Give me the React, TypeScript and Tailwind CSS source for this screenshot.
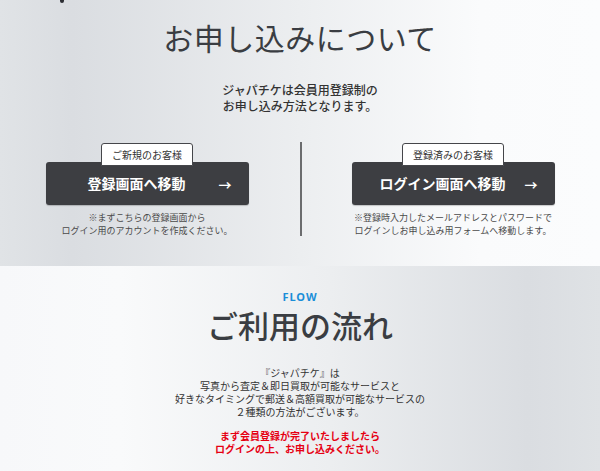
const jp = { fontFamily: '"Noto Sans CJK JP", "Noto Sans", sans-serif' }

function EntryButton({ tab, label, notes }: { tab: string; label: string; notes: string[] }) {
  return (
    <div className="flex w-[203px] flex-col items-center">
      <div className="relative z-10 mb-[-4px] flex h-[23px] items-center rounded-t-[3px] border border-[#45464a] bg-white px-[10px] text-[10px] leading-none text-[#333]">
        {tab}
      </div>
      <div className="relative flex h-[43px] w-full items-center justify-center rounded-[3px] bg-[#3d3e42] pr-[21px] text-[14px] font-bold text-white shadow-[0_1px_1px_rgba(0,0,0,0.2)]">
        {label}
        <span className="absolute right-[17px] top-1/2 -translate-y-1/2 text-[13px] font-bold leading-none">→</span>
      </div>
      <div className="mt-[6px] text-center text-[9px] leading-[13px] text-[#4a4a4a]">
        {notes.map((n) => (
          <div key={n}>{n}</div>
        ))}
      </div>
    </div>
  )
}

export default function App() {
  return (
    <div className="h-[471px] w-[600px] overflow-hidden" style={jp}>
      <section className="relative flex h-[266px] flex-col items-center bg-[linear-gradient(to_right,#e0e3e6_0%,#dadde1_12%,#eceef0_50%,#fafbfc_80%,#fbfcfd_100%)] pt-[22px]">
        <span className="absolute left-[60px] top-[-2px] h-[5px] w-[4px] rounded-full bg-[#2c2e33]" />
        <h1 className="text-[30px] font-normal leading-[30px] tracking-[0.5px] text-[#3a3d42]">お申し込みについて</h1>
        <p className="mt-[30px] text-center text-[12px] font-medium leading-[16px] text-[#333]">
          ジャパチケは会員用登録制の
          <br />
          お申し込み方法となります。
        </p>
        <div className="mt-[29px] flex items-start gap-[50px]">
          <EntryButton
            tab="ご新規のお客様"
            label="登録画面へ移動"
            notes={['※まずこちらの登録画面から', 'ログイン用のアカウントを作成ください。']}
          />
          <div className="ml-[1px] mt-[-1px] h-[94px] w-[2px] bg-[#6b6c6e]" />
          <EntryButton
            tab="登録済みのお客様"
            label="ログイン画面へ移動"
            notes={['※登録時入力したメールアドレスとパスワードで', 'ログインしお申し込み用フォームへ移動します。']}
          />
        </div>
      </section>
      <section className="flex h-[205px] flex-col items-center bg-[linear-gradient(to_right,#f7f8fa_0%,#f9fafb_20%,#eceef0_55%,#dadde1_88%,#dfe2e5_100%)] pt-[24px]">
        <div className="text-[11px] font-bold leading-[13px] tracking-[1px] text-[#1a8ed8]" style={{ fontFamily: '"Noto Sans", sans-serif' }}>
          FLOW
        </div>
        <h2 className="mt-[6px] text-[31px] font-medium leading-[31px] text-[#3a3d42]">ご利用の流れ</h2>
        <p className="mt-[26px] text-center text-[10px] leading-[13px] text-[#333]">
          『ジャパチケ』は
          <br />
          写真から査定＆即日買取が可能なサービスと
          <br />
          好きなタイミングで郵送＆高額買取が可能なサービスの
          <br />
          ２種類の方法がございます。
        </p>
        <p className="mt-[11px] text-center text-[10px] font-bold leading-[13px] text-[#e60012]">
          まず会員登録が完了いたしましたら
          <br />
          ログインの上、お申し込みください。
        </p>
      </section>
    </div>
  )
}
